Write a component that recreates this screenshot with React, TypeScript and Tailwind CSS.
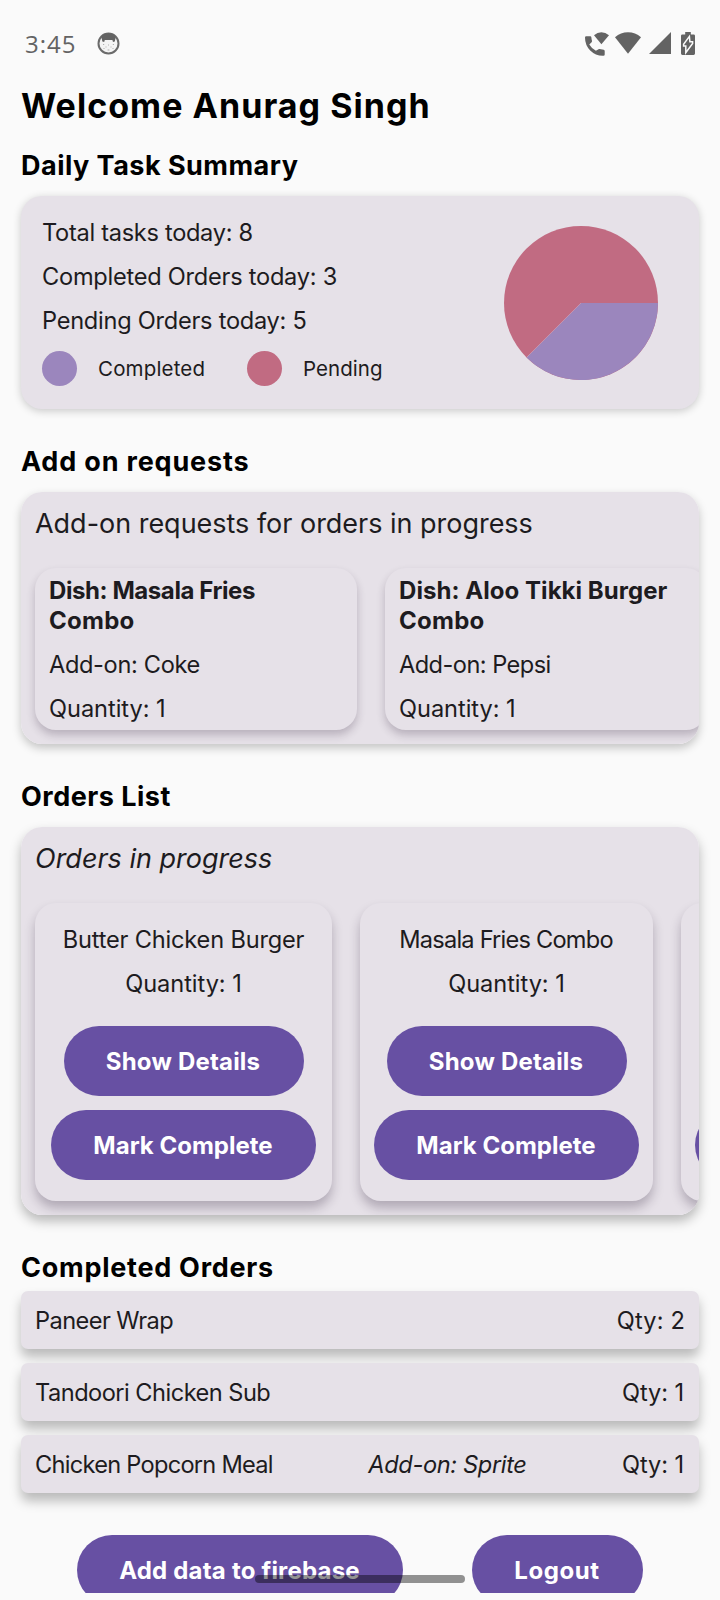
import React from "react";

const cardBase = "bg-[#e6e1e8] rounded-[21px]";

function Heading({ children, className }: { children: React.ReactNode; className: string }) {
  return <h2 className={`text-[27px] font-bold leading-9 text-black ${className}`}>{children}</h2>;
}

function Quantity() {
  return <p className="tracking-[-0.05px]">Quantity: 1</p>;
}

function PillButton({ label, className }: { label?: string; className: string }) {
  return (
    <button
      className={`flex h-[70px] shrink-0 items-center justify-center rounded-full bg-[#6750a3] pt-0.5 pr-px text-[24px] font-bold leading-[30px] text-white ${className}`}
    >
      {label}
    </button>
  );
}

function StatusBar() {
  return (
    <div className="flex h-[84px] items-start pt-7 pl-[25px] text-[#636363]">
      <span className="w-[72px] font-['Open_Sans',sans-serif] text-[24px] leading-[31px] tracking-[1px]">3:45</span>
      <svg className="mt-1 h-[23px] w-[23px]" viewBox="0 0 23 23">
        <circle cx="11.5" cy="11.5" r="10" fill="#f4f4f4" stroke="#6b6b6b" strokeWidth="2" />
        <path
          d="M4.2 4.4C6 2 8.6 1.2 11.5 1.2S17 2 18.8 4.4L17.8 9.6 16 10 15.4 8H7.8L7.2 10 5.4 9.6Z"
          fill="#636363"
        />
        <path
          d="M6 12.5h1.2M15.8 12.5h1.2M8.5 15h1M13.5 15h1M11 13h1M10.6 18h1.8M6.5 16.5h1M15.5 16.5h1"
          stroke="#b0b0b0"
          strokeWidth="1"
        />
      </svg>
      <div className="ml-auto flex items-start pr-[25px]">
        <svg className="mt-1 h-6 w-6" viewBox="0 0 24 24" fill="currentColor">
          <path d="M0 5.6Q0 4.3 1.3 4.3H5.2Q6.3 4.3 6.4 5.4Q6.5 7.2 7 8.8Q7.2 9.6 6.6 10.2L4.3 12.4Q6.6 16.4 10.9 18.8L13.1 17.4Q13.7 16.8 14.5 17.1L18.7 17.8Q19.7 18 19.7 19V22.6Q19.7 23.8 18.4 23.8Q10.6 24 5.2 18.6Q0 13.2 0 5.6Z" />
          <path d="M9 3.2Q12.4.2 16.4.2T24 3.2L16.4 12.2Z" />
        </svg>
        <svg className="mt-1 ml-1.5 h-[22px] w-[26px]" viewBox="0 0 26 22" fill="currentColor">
          <path d="M0 5.3Q5.6.2 13 .2T26 5.3L13 21.8Z" />
        </svg>
        <svg className="mt-1 ml-2 h-[22px] w-[22px]" viewBox="0 0 22 22" fill="currentColor">
          <path d="M22 0V22H0Z" />
        </svg>
        <svg className="mt-1 ml-[10px] h-[23px] w-[14px]" viewBox="0 0 14 23">
          <path
            d="M4.2 0h5.6v2.4H12.6Q14 2.4 14 3.8V21.6Q14 23 12.6 23H1.4Q0 23 0 21.6V3.8Q0 2.4 1.4 2.4H4.2Z"
            fill="currentColor"
          />
          <path
            d="M8.4 4.4 2.6 12.2V14H4.8V20.6L11.6 11.4V9.8H8.9Z"
            fill="none"
            stroke="#fafafa"
            strokeWidth="1.5"
          />
        </svg>
      </div>
    </div>
  );
}

function DailySummary() {
  return (
    <div
      className={`${cardBase} mt-3 flex h-[213px] justify-between pt-[21px] pr-[41px] pl-[21px] shadow-[0_2px_8px_rgba(0,0,0,0.2)]`}
    >
      <div>
        <div className="flex flex-col gap-3">
          <p className="tracking-[-0.3px]">Total tasks today: 8</p>
          <p className="tracking-[-0.25px]">Completed Orders today: 3</p>
          <p className="tracking-[-0.26px]">Pending Orders today: 5</p>
        </div>
        <div className="mt-3.5 flex items-center text-[20.5px] leading-[33px]">
          <span className="h-[35px] w-[35px] rounded-full bg-[#9b86bd]" />
          <span className="ml-[21px] w-[149px] pb-px tracking-[0.16px]">Completed</span>
          <span className="h-[35px] w-[35px] rounded-full bg-[#c16b82]" />
          <span className="ml-[21px] pb-px tracking-[0.05px]">Pending</span>
        </div>
      </div>
      <svg className="mt-[9px] h-[154px] w-[154px]" viewBox="0 0 154 154">
        <circle cx="77" cy="77" r="77" fill="#c16b82" />
        <path d="M77 77H154A77 77 0 0 1 22.55 131.45Z" fill="#9b86bd" />
        <path d="M77 77 22.55 131.45" stroke="#d3a6b8" strokeWidth="0.6" />
      </svg>
    </div>
  );
}

function AddOnRequests() {
  const inner = `${cardBase} h-[162px] w-[322px] shrink-0 px-3.5 pt-2 shadow-[0_5px_8px_rgba(40,25,50,0.24)]`;
  return (
    <div className="mt-3 rounded-[21px] shadow-[0_4px_10px_rgba(0,0,0,0.22)]">
      <div className={`${cardBase} h-[252px] overflow-hidden pt-[14px] pl-3.5`}>
        <p className="text-[27px] leading-9 tracking-[-0.02px]">Add-on requests for orders in progress</p>
        <div className="mt-[26px] flex gap-7">
          <div className={inner}>
            <p className="text-[24px] font-bold leading-[30px]">
              <span className="tracking-[-0.42px]">Dish: Masala Fries</span>
              <br />
              <span className="tracking-[0.25px]">Combo</span>
            </p>
            <p className="mt-[13px] mb-3 tracking-[-0.35px]">Add-on: Coke</p>
            <Quantity />
          </div>
          <div className={inner}>
            <p className="text-[24px] font-bold leading-[30px]">
              <span className="tracking-[0.05px]">Dish: Aloo Tikki Burger</span>
              <br />
              <span className="tracking-[0.25px]">Combo</span>
            </p>
            <p className="mt-[13px] mb-3 tracking-[-0.55px]">Add-on: Pepsi</p>
            <Quantity />
          </div>
        </div>
      </div>
    </div>
  );
}

const orderCard = `${cardBase} flex h-[298px] shrink-0 flex-col items-center pt-[21px] shadow-[0_7px_11px_rgba(40,25,50,0.28)]`;

function OrderCard({ children, className }: { children: React.ReactNode; className: string }) {
  return (
    <div className={`${orderCard} gap-3 ${className}`}>
      {children}
      <Quantity />
      <PillButton label="Show Details" className="mt-3.5 w-60 tracking-[0.2px]" />
      <PillButton label="Mark Complete" className="mt-0.5 w-[265px] tracking-[0.01px]" />
    </div>
  );
}

function OrdersInProgress() {
  return (
    <div className="mt-3 rounded-[21px] shadow-[0_6px_12px_rgba(0,0,0,0.27)]">
      <div className={`${cardBase} h-[388px] overflow-hidden pt-[14px] pl-3.5`}>
        <p className="text-[27px] leading-9 tracking-[-0.01px] italic">Orders in progress</p>
        <div className="mt-[26px] flex gap-7">
          <OrderCard className="w-[297px]">
            <p className="tracking-[-0.18px]">Butter Chicken Burger</p>
          </OrderCard>
          <OrderCard className="w-[293px]">
            <p className="pr-px tracking-[-0.78px]">Masala Fries Combo</p>
          </OrderCard>
          <div className={`${orderCard} w-[293px]`}>
            <PillButton className="mt-[186px] w-[265px]" />
          </div>
        </div>
      </div>
    </div>
  );
}

const row =
  "flex h-[58px] items-center justify-between rounded-[7px] bg-[#e6e1e8] px-3.5 pt-px shadow-[0_8px_12px_rgba(0,0,0,0.26)]";

function CompletedOrders() {
  return (
    <div className="mt-[5px] flex flex-col gap-3.5">
      <div className={row}>
        <span className="tracking-[-0.56px]">Paneer Wrap</span>
        <span className="tracking-[0.15px]">Qty: 2</span>
      </div>
      <div className={row}>
        <span className="tracking-[-0.52px]">Tandoori Chicken Sub</span>
        <span className="mr-px tracking-[-0.1px]">Qty: 1</span>
      </div>
      <div className={row}>
        <span className="tracking-[-0.73px]">Chicken Popcorn Meal</span>
        <span className="tracking-[-0.35px] italic">Add-on: Sprite</span>
        <span className="mr-px tracking-[-0.1px]">Qty: 1</span>
      </div>
    </div>
  );
}

export default function App() {
  return (
    <div className="relative h-[1600px] w-[720px] overflow-hidden bg-[#fafafa] font-['Inter',sans-serif] text-[23.6px] leading-[32px] text-[#1d1b20]">
      <div className="h-[1593px] overflow-hidden">
        <StatusBar />
        <main className="px-[21px]">
          <h1 className="text-[34px] font-bold leading-[44px] tracking-[1.04px] text-black">Welcome Anurag Singh</h1>
          <Heading className="mt-5 tracking-[0.48px]">Daily Task Summary</Heading>
          <DailySummary />
          <Heading className="mt-[35px] tracking-[0.83px]">Add on requests</Heading>
          <AddOnRequests />
          <Heading className="mt-[35px] tracking-[0.5px]">Orders List</Heading>
          <OrdersInProgress />
          <Heading className="mt-[35px] tracking-[0.74px]">Completed Orders</Heading>
          <CompletedOrders />
          <div className="mt-[42px] flex gap-[69px] px-14">
            <PillButton label="Add data to firebase" className="w-[326px] tracking-[0.2px]" />
            <PillButton label="Logout" className="w-[171px] tracking-[0.58px]" />
          </div>
        </main>
      </div>
      <div className="absolute top-[1575px] left-[255px] h-2 w-[210px] rounded-full bg-black/42" />
    </div>
  );
}
